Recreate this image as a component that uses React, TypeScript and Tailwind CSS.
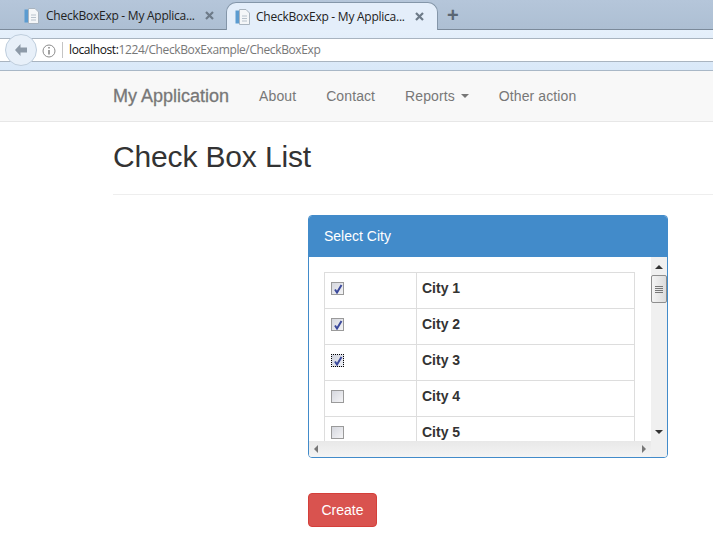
const cities = [
  { name: 'City 1', checked: true },
  { name: 'City 2', checked: true },
  { name: 'City 3', checked: true, focused: true },
  { name: 'City 4', checked: false },
  { name: 'City 5', checked: false },
];

function PageIcon() {
  return (
    <svg width="16" height="16" viewBox="0 0 16 16" className="shrink-0">
      <rect x="0.5" y="1.5" width="5" height="13" fill="#5b9bd0" />
      <path d="M4.5 0.5H11L14.5 4V15.5H4.5Z" fill="#f4f6f8" stroke="#a9b4bf" />
      <path d="M7 7h5M7 9.5h5M7 12h5" stroke="#b8c2cc" />
    </svg>
  );
}

function CloseIcon() {
  return (
    <svg width="9" height="9" viewBox="0 0 9 9" className="shrink-0">
      <path d="M1 1l7 7M8 1l-7 7" stroke="#6d7a88" strokeWidth="2.2" />
    </svg>
  );
}

function CheckBox({ checked, focused }: { checked: boolean; focused?: boolean }) {
  return (
    <div
      className={
        focused
          ? 'w-[13px] h-[13px] border border-dotted border-black bg-gradient-to-br from-[#cfd2dc] to-[#eef0f6] flex items-center justify-center'
          : 'w-[13px] h-[13px] border border-[#9a9a9a] bg-gradient-to-br from-[#d5d7de] to-[#f4f4f6] flex items-center justify-center'
      }
    >
      {checked && (
        <svg width="10" height="10" viewBox="0 0 10 10">
          <path d="M2 5.5L4 8.5L8.5 1" fill="none" stroke="#3c4a9c" strokeWidth="2" />
        </svg>
      )}
    </div>
  );
}

function Tab({ active }: { active?: boolean }) {
  return (
    <div
      className={
        active
          ? 'w-[212px] h-[28px] -mb-px flex items-center pl-[8px] pr-[13px] gap-[5px] bg-[#e4eefa] border border-b-0 border-[#8496a9] rounded-t-[10px] z-10'
          : 'w-[204px] h-[28px] pt-px flex items-center pl-[4px] pr-[10px] gap-[6px]'
      }
    >
      <PageIcon />
      <span className="flex-1 text-[12px] text-[#222] whitespace-nowrap font-['Open_Sans',sans-serif] tracking-[-0.25px]">
        CheckBoxExp - My Applica...
      </span>
      <CloseIcon />
    </div>
  );
}

export default function App() {
  return (
    <div className="w-[713px] h-[541px] overflow-hidden bg-white font-['Liberation_Sans',sans-serif] text-[14px] text-[#333]">
      <div className="h-[30px] flex items-end pl-[20px] border-b border-[#7b8a9a] bg-gradient-to-b from-[#b5c6da] to-[#adbfd3]">
        <Tab />
        <div className="w-[2px]" />
        <Tab active />
        <span className="ml-[9px] mb-[4px] text-[20px] leading-[20px] font-bold text-[#5a6673]">+</span>
      </div>

      <div className="h-[41px] flex flex-col justify-between bg-gradient-to-b from-[#e6f0fb] to-[#d9e8f8] border-b border-[#a9b8c7]">
        <div className="mt-[8px] h-[24px] flex items-center bg-white border-y border-[#a9b4c0] pl-[6px]">
          <div className="w-[32px] h-[32px] -ml-[1px] shrink-0 rounded-full border border-[#bfcedd] bg-[#e8f0f9] flex items-center justify-center">
            <svg width="16" height="14" viewBox="0 0 16 14">
              <path d="M7.5 1L2 7l5.5 6V9.5H14v-5H7.5Z" fill="#8d9aa8" />
            </svg>
          </div>
          <svg width="14" height="14" viewBox="0 0 14 14" className="ml-[5px] mt-px shrink-0">
            <circle cx="7" cy="7" r="6" fill="none" stroke="#8c8c8c" />
            <path d="M7 3v1.5M7 6v4.5" stroke="#7a7a7a" strokeWidth="1.4" />
          </svg>
          <div className="w-px h-[16px] bg-[#c4c4c4] ml-[6px] mr-[6px]" />
          <span className="font-['Open_Sans',sans-serif] text-[12px] tracking-[-0.39px] text-[#777]">
            <span className="text-[#111]">localhost:</span>1224/CheckBoxExample/CheckBoxExp
          </span>
        </div>
      </div>

      <nav className="h-[51px] flex items-center pl-[113px] bg-[#f8f8f8] border-b border-[#e7e7e7] text-[#777]">
        <span className="text-[18px] mt-px mr-[30px] [-webkit-text-stroke:0.3px_#777]">My Application</span>
        <div className="flex gap-[30px] tracking-[0.1px]">
          <span>About</span>
          <span>Contact</span>
          <span className="flex items-center gap-[6px]">
            Reports
            <span className="w-0 h-0 border-x-4 border-x-transparent border-t-4 border-t-[#777]" />
          </span>
          <span>Other action</span>
        </div>
      </nav>

      <div className="pl-[113px]">
        <h1 className="text-[30px] leading-[33px] pt-[18px] pb-[21px] border-b border-[#eeeeee] tracking-[-0.15px] text-[#333]">
          Check Box List
        </h1>
      </div>

      <div className="pl-[308px] pt-[20px]">
        <div className="w-[360px] h-[243px] flex flex-col border border-[#428bca] rounded-[4px] overflow-hidden">
          <div className="h-[41px] shrink-0 flex items-center pl-[15px] bg-[#428bca] text-white">Select City</div>
          <div className="flex-1 flex min-h-0">
            <div className="flex-1 flex flex-col min-w-0">
              <div className="h-[184px] overflow-hidden pt-[15px] pl-[15px]">
                <table className="w-[311px] border-collapse">
                  <tbody>
                    {cities.map((city) => (
                      <tr key={city.name} className="h-[36px]">
                        <td className="w-[92px] border border-[#dddddd] pl-[6px] pb-[4px] align-middle">
                          <CheckBox checked={city.checked} focused={city.focused} />
                        </td>
                        <td className="border border-[#dddddd] pl-[5px] pb-[4px] font-bold align-middle">{city.name}</td>
                      </tr>
                    ))}
                  </tbody>
                </table>
              </div>
              <div className="h-[16px] shrink-0 flex items-center justify-between px-[5px] bg-gradient-to-b from-[#e8e8e8] to-[#f4f4f4]">
                <span className="w-0 h-0 border-y-[4px] border-y-transparent border-r-[4px] border-r-[#777]" />
                <span className="w-0 h-0 border-y-[4px] border-y-transparent border-l-[4px] border-l-[#777]" />
              </div>
            </div>
            <div className="w-[16px] shrink-0 flex flex-col items-center bg-[#f0f0f0]">
              <span className="mt-[8px] w-0 h-0 border-x-[4px] border-x-transparent border-b-[4px] border-b-[#333]" />
              <div className="mt-[6px] w-[16px] h-[28px] flex flex-col items-center justify-center gap-[1px] border border-[#8e8e8e] rounded-[2px] bg-gradient-to-r from-[#f4f4f4] to-[#dcdcdc]">
                <div className="w-[8px] h-px bg-[#777]" />
                <div className="w-[8px] h-px bg-[#777]" />
                <div className="w-[8px] h-px bg-[#777]" />
                <div className="w-[8px] h-px bg-[#777]" />
              </div>
              <div className="flex-1" />
              <span className="mb-[23px] w-0 h-0 border-x-[4px] border-x-transparent border-t-[4px] border-t-[#333]" />
            </div>
          </div>
        </div>

        <button className="mt-[35px] w-[69px] h-[34px] rounded-[4px] border border-[#d43f3a] bg-[#d9534f] text-white">
          Create
        </button>
      </div>
    </div>
  );
}
